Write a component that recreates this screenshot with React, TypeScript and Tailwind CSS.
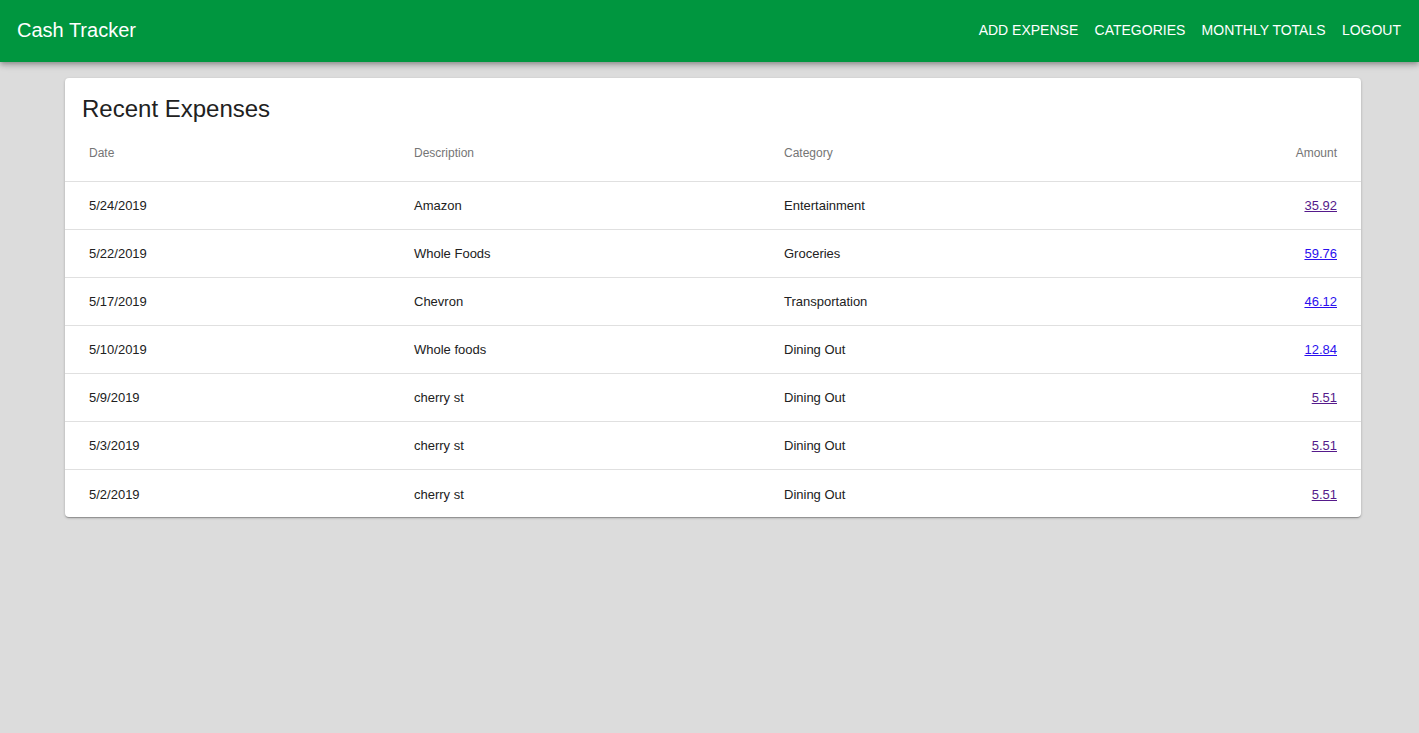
import React from "react";

type Row = { date: string; desc: string; cat: string; amt: string; visited: boolean };

const rows: Row[] = [
  { date: "5/24/2019", desc: "Amazon", cat: "Entertainment", amt: "35.92", visited: true },
  { date: "5/22/2019", desc: "Whole Foods", cat: "Groceries", amt: "59.76", visited: false },
  { date: "5/17/2019", desc: "Chevron", cat: "Transportation", amt: "46.12", visited: false },
  { date: "5/10/2019", desc: "Whole foods", cat: "Dining Out", amt: "12.84", visited: false },
  { date: "5/9/2019", desc: "cherry st", cat: "Dining Out", amt: "5.51", visited: true },
  { date: "5/3/2019", desc: "cherry st", cat: "Dining Out", amt: "5.51", visited: true },
  { date: "5/2/2019", desc: "cherry st", cat: "Dining Out", amt: "5.51", visited: true },
];

export default function App() {
  return (
    <div className="min-h-[733px] bg-[#dcdcdc] font-['Liberation_Sans',Arial,sans-serif]">
      <header className="relative z-10 h-[62px] bg-[#00963f] flex items-center justify-between pl-[17px] pr-[18px] pb-[2px] shadow-[0_2px_4px_-1px_rgba(0,0,0,0.2),0_4px_5px_0_rgba(0,0,0,0.14),0_1px_10px_0_rgba(0,0,0,0.12)]">
        <div className="text-white text-[20px] leading-none">Cash Tracker</div>
        <nav className="flex items-center gap-[16.3px] text-white text-[14px] leading-none">
          <span>ADD EXPENSE</span>
          <span>CATEGORIES</span>
          <span>MONTHLY TOTALS</span>
          <span>LOGOUT</span>
        </nav>
      </header>
      <main className="pl-[65px] pt-[16px]">
        <div className="w-[1296px] bg-white rounded-[4px] shadow-[0_1px_3px_0_rgba(0,0,0,0.2),0_1px_1px_0_rgba(0,0,0,0.14),0_2px_1px_-1px_rgba(0,0,0,0.12)] overflow-hidden">
          <h2 className="text-[24px] leading-none text-[#212121] pl-[17px] pt-[19px] pb-[4px]">Recent Expenses</h2>
          <table className="w-full border-collapse table-fixed">
            <colgroup>
              <col className="w-[325px]" />
              <col className="w-[370px]" />
              <col />
              <col className="w-[200px]" />
            </colgroup>
            <thead>
              <tr className="h-[56px] border-b border-[#e0e0e0]">
                <th className="text-left font-normal text-[12px] text-[#757575] pl-[24px]">Date</th>
                <th className="text-left font-normal text-[12px] text-[#757575] pl-[24px]">Description</th>
                <th className="text-left font-normal text-[12px] text-[#757575] pl-[24px]">Category</th>
                <th className="text-right font-normal text-[12px] text-[#757575] pr-[24px]">Amount</th>
              </tr>
            </thead>
            <tbody>
              {rows.map((r, i) => (
                <tr key={i} className={`h-[48px] ${i < rows.length - 1 ? "border-b border-[#e0e0e0]" : ""}`}>
                  <td className="text-[13px] text-[#212121] pl-[24px] pt-[2px]">{r.date}</td>
                  <td className="text-[13px] text-[#212121] pl-[24px] pt-[2px]">{r.desc}</td>
                  <td className="text-[13px] text-[#212121] pl-[24px] pt-[2px]">{r.cat}</td>
                  <td className="text-[13px] text-right pr-[24px] pt-[2px]">
                    <a href="#" className={`underline ${r.visited ? "text-[#551a8b]" : "text-[#2a10ee]"}`}>{r.amt}</a>
                  </td>
                </tr>
              ))}
            </tbody>
          </table>
        </div>
      </main>
    </div>
  );
}
